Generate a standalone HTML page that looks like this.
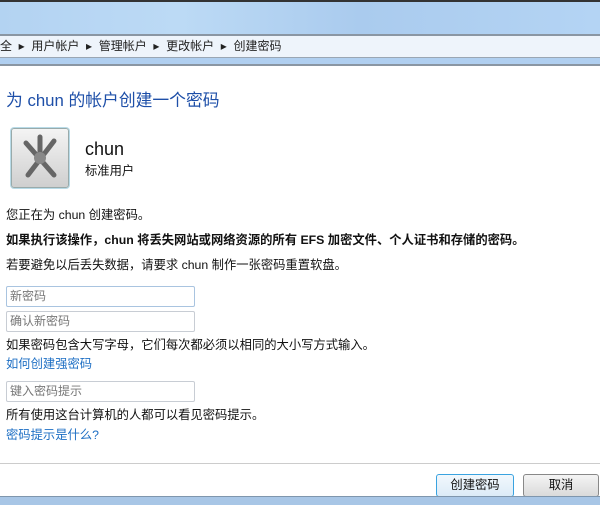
<!DOCTYPE html>
<html><head><meta charset="utf-8"><style>
body{margin:0;width:600px;height:504px;overflow:hidden;background:#fff;font-family:"Liberation Sans","Noto Sans CJK SC",sans-serif;font-size:12.3px;color:#111;position:relative}
.a{position:absolute;white-space:nowrap}
.in{position:absolute;left:6px;width:184px;height:19px;border:1px solid #c8cdd4;border-radius:2px;color:#777;font-size:12px;line-height:19px;padding-left:3px;box-sizing:content-box}
.lk{color:#1e6fc4}
</style></head><body>
<div class="a" style="left:0;top:0;width:600px;height:2px;background:#333"></div>
<div class="a" style="left:0;top:2px;width:600px;height:32px;background:linear-gradient(90deg,#b3d3f2,#bcdaf5 30%,#aacbee 60%,#b4d4f4)"></div>
<div class="a" style="left:0;top:34px;width:600px;height:2px;background:#8a96a3"></div>
<div class="a" style="left:0;top:36px;width:600px;height:21px;background:#eef4fb;font-size:12px;line-height:21px;color:#222">全 &nbsp;▸&nbsp; 用户帐户 &nbsp;▸&nbsp; 管理帐户 &nbsp;▸&nbsp; 更改帐户 &nbsp;▸&nbsp; 创建密码</div>
<div class="a" style="left:0;top:57px;width:600px;height:1px;background:#9aa6b3"></div>
<div class="a" style="left:0;top:58px;width:600px;height:6px;background:#b0cff0"></div>
<div class="a" style="left:0;top:64px;width:600px;height:2px;background:#8a96a3"></div>
<div class="a" style="left:6px;top:87px;font-size:16.8px;color:#1e4fa8">为 chun 的帐户创建一个密码</div>
<div class="a" style="left:11px;top:128px;width:56px;height:58px;border:1px solid #9aa;border-radius:3px;background:linear-gradient(#f4f4f4,#cfcfcf);box-shadow:0 0 0 1px #b8dbe8">
<svg width="56" height="58" viewBox="0 0 56 58"><g stroke="#666" stroke-width="5" stroke-linecap="round"><line x1="14" y1="14" x2="42" y2="46"/><line x1="42" y1="12" x2="16" y2="46"/><line x1="28" y1="8" x2="28" y2="30"/></g><circle cx="28" cy="29" r="6" fill="#888"/></svg></div>
<div class="a" style="left:85px;top:139px;font-size:18px">chun</div>
<div class="a" style="left:85px;top:161px">标准用户</div>
<div class="a" style="left:6px;top:205px">您正在为 chun 创建密码。</div>
<div class="a" style="left:6px;top:230px;font-weight:bold">如果执行该操作，chun 将丢失网站或网络资源的所有 EFS 加密文件、个人证书和存储的密码。</div>
<div class="a" style="left:6px;top:255px">若要避免以后丢失数据，请要求 chun 制作一张密码重置软盘。</div>
<div class="in" style="top:286px;border-color:#a9c4e0">新密码</div>
<div class="in" style="top:311px">确认新密码</div>
<div class="a" style="left:6px;top:335px">如果密码包含大写字母，它们每次都必须以相同的大小写方式输入。</div>
<div class="a lk" style="left:6px;top:354px">如何创建强密码</div>
<div class="in" style="top:381px">键入密码提示</div>
<div class="a" style="left:6px;top:405px">所有使用这台计算机的人都可以看见密码提示。</div>
<div class="a lk" style="left:6px;top:425px">密码提示是什么?</div>
<div class="a" style="left:0;top:463px;width:600px;height:1px;background:#ccc"></div>
<div class="a" style="left:436px;top:474px;width:76px;height:21px;border:1px solid #3aa3e0;border-radius:3px;background:linear-gradient(#f2f8fd,#dcebf7);text-align:center;line-height:21px">创建密码</div>
<div class="a" style="left:523px;top:474px;width:74px;height:21px;border:1px solid #888;border-radius:3px;background:linear-gradient(#f4f4f4,#dadada);text-align:center;line-height:21px">取消</div>
<div class="a" style="left:0;top:496px;width:600px;height:8px;background:#a8c6e6;border-top:1px solid #7f96ad"></div>
</body></html>
